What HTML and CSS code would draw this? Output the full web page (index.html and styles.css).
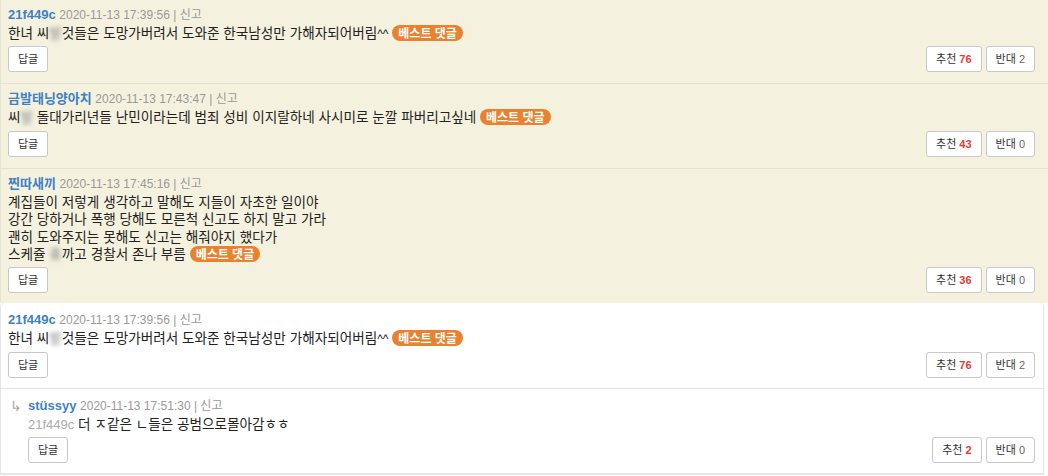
FILE: index.html
```html
<!DOCTYPE html>
<html lang="ko">
<head>
<meta charset="utf-8">
<link rel="stylesheet" href="styles.css">
</head>
<body>
<div class="best">
  <div class="comment">
    <div class="meta"><span class="name">21f449c</span> <span class="date">2020-11-13 17:39:56 | 신고</span></div>
    <div class="text">한녀 씨<span class="blur">발</span>것들은 도망가버려서 도와준 한국남성만 가해자되어버림<span class="lat">^^</span> <span class="badge">베스트 댓글</span></div>
    <div class="actions">
      <button class="btn">답글</button>
      <div class="votes"><button class="btn">추천 <b class="up">76</b></button><button class="btn">반대 <span class="down">2</span></button></div>
    </div>
  </div>
  <div class="comment">
    <div class="meta"><span class="name">금발태닝양아치</span> <span class="date">2020-11-13 17:43:47 | 신고</span></div>
    <div class="text">씨<span class="blur">발</span> 돌대가리년들 난민이라는데 범죄 성비 이지랄하네 사시미로 눈깔 파버리고싶네 <span class="badge">베스트 댓글</span></div>
    <div class="actions">
      <button class="btn">답글</button>
      <div class="votes"><button class="btn">추천 <b class="up">43</b></button><button class="btn">반대 <span class="down">0</span></button></div>
    </div>
  </div>
  <div class="comment last">
    <div class="meta"><span class="name">찐따새끼</span> <span class="date">2020-11-13 17:45:16 | 신고</span></div>
    <div class="text">계집들이 저렇게 생각하고 말해도 지들이 자초한 일이야<br>강간 당하거나 폭행 당해도 모른척 신고도 하지 말고 가라<br>괜히 도와주지는 못해도 신고는 해줘야지 했다가<br>스케쥴 <span class="blur">좆</span>까고 경찰서 존나 부름 <span class="badge">베스트 댓글</span></div>
    <div class="actions">
      <button class="btn">답글</button>
      <div class="votes"><button class="btn">추천 <b class="up">36</b></button><button class="btn">반대 <span class="down">0</span></button></div>
    </div>
  </div>
</div>
<div class="list">
  <div class="comment">
    <div class="meta"><span class="name">21f449c</span> <span class="date">2020-11-13 17:39:56 | 신고</span></div>
    <div class="text">한녀 씨<span class="blur">발</span>것들은 도망가버려서 도와준 한국남성만 가해자되어버림<span class="lat">^^</span> <span class="badge">베스트 댓글</span></div>
    <div class="actions">
      <button class="btn">답글</button>
      <div class="votes"><button class="btn">추천 <b class="up">76</b></button><button class="btn">반대 <span class="down">2</span></button></div>
    </div>
  </div>
  <div class="comment reply">
    <span class="arrow">↳</span>
    <div class="meta"><span class="name">stüssyy</span> <span class="date">2020-11-13 17:51:30 | 신고</span></div>
    <div class="text"><span class="to">21f449c</span> 더 ㅈ같은 ㄴ들은 공범으로몰아감ㅎㅎ</div>
    <div class="actions">
      <button class="btn">답글</button>
      <div class="votes"><button class="btn">추천 <b class="up">2</b></button><button class="btn">반대 <span class="down">0</span></button></div>
    </div>
  </div>
</div>
</body>
</html>
```

FILE: styles.css
```css
html, body {
  margin: 0;
  padding: 0;
  background: #fff;
}
body {
  font-family: "Liberation Sans", Arial, "Noto Sans CJK KR", sans-serif;
  font-size: 13px;
  line-height: 17.5px;
  color: #333;
  width: 1048px;
  height: 476px;
  overflow: hidden;
}
.best {
  background: #f4f2df;
  border-left: 1px solid #e6e4d2;
}
.comment {
  position: relative;
  padding: 6px 8px 11px 7px;
  border-bottom: 1px solid #e4e2cf;
}
.best .comment.last {
  border-bottom: none;
  padding-bottom: 10px;
}
.list {
  width: 1042px;
  border: 1px solid #e5e5e5;
  border-top: none;
  border-radius: 4px 4px 0 0;
  background: #fff;
}
.list .comment {
  border-bottom: 1px solid #e5e5e5;
  padding-top: 8px;
  padding-bottom: 10px;
}
.meta {
  height: 18px;
  line-height: 18px;
  overflow: hidden;
}
.meta .name {
  color: #3f7fc5;
  font-weight: bold;
}
.meta .date {
  color: #999;
  font-size: 12px;
}
.text {
  color: #222;
  font-family: "Noto Sans CJK KR", sans-serif;
  font-size: 13.6px;
  line-height: 17.4px;
  height: auto;
}
.lat {
  font-family: "Liberation Sans", Arial, sans-serif;
  font-size: 12px;
  line-height: 12px;
}
.blur {
  display: inline-block;
  filter: blur(2.2px);
  color: #888;
  vertical-align: top;
}
.badge {
  display: inline-block;
  background: #e8822e;
  color: #fff;
  font-family: "Noto Sans CJK KR", sans-serif;
  font-weight: bold;
  font-size: 12px;
  line-height: 16px;
  height: 16px;
  padding: 0 6px;
  border-radius: 8px;
  vertical-align: top;
  margin-top: 1px;
}
.actions {
  display: flex;
  justify-content: space-between;
  align-items: flex-start;
  margin-top: 5px;
}
.votes {
  display: flex;
  gap: 4px;
  margin-right: 5px;
}
.list .votes {
  margin-right: 0;
}
.btn {
  font-family: "Liberation Sans", Arial, "Noto Sans CJK KR", sans-serif;
  font-size: 11px;
  color: #333;
  background: #fff;
  border: 1px solid #c8c8c8;
  border-radius: 3px;
  height: 26px;
  padding: 0 9px;
  margin: 0;
  line-height: 24px;
}
.btn .up {
  color: #e53935;
}
.btn .down {
  color: #666;
}
.reply {
  padding-left: 27px;
}
.reply .arrow {
  position: absolute;
  left: 9px;
  top: 9px;
  color: #aaa;
  font-size: 14px;
}
.to {
  color: #aaa;
  font-family: "Liberation Sans", Arial, sans-serif;
  font-size: 13px;
  line-height: 13px;
}
```
